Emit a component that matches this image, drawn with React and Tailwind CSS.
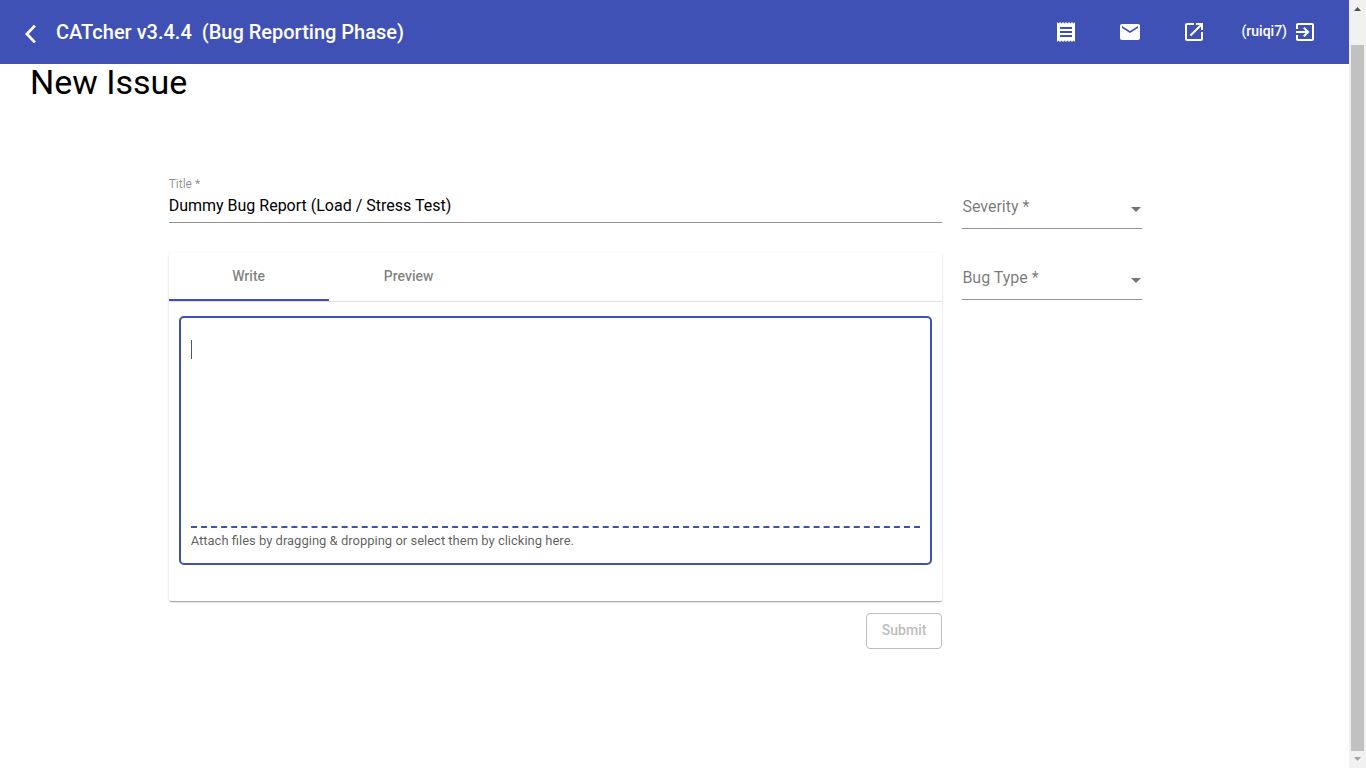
import React, { useState } from "react";

function Icon({ d, className = "size-6" }) {
  return (
    <svg viewBox="0 0 24 24" fill="currentColor" aria-hidden="true" className={className}>
      <path d={d} />
    </svg>
  );
}

const BACK = "M11.9 3.9L9.7 1.8 0 12l9.700 10.200 2.200-2.100L4.200 12z";
const RECEIPT =
  "M18 17H6v-2h12v2zm0-4H6v-2h12v2zm0-4H6V7h12v2zM3 22l1.5-1.5L6 22l1.5-1.5L9 22l1.5-1.5L12 22l1.5-1.5L15 22l1.5-1.5L18 22l1.5-1.5L21 22V2l-1.5 1.5L18 2l-1.5 1.5L15 2l-1.5 1.5L12 2l-1.5 1.5L9 2 7.5 3.5 6 2 4.5 3.5 3 2v20z";
const MAIL =
  "M20 4H4c-1.1 0-1.99.9-1.99 2L2 18c0 1.1.9 2 2 2h16c1.1 0 2-.9 2-2V6c0-1.1-.9-2-2-2zm0 4l-8 5-8-5V6l8 5 8-5v2z";
const OPEN =
  "M19 19H5V5h7V3H5c-1.11 0-2 .9-2 2v14c0 1.1.89 2 2 2h14c1.1 0 2-.9 2-2v-7h-2v7zM14 3v2h3.59l-9.83 9.83 1.41 1.41L19 6.41V10h2V3h-7z";
const EXIT =
  "M10.09 15.59L11.5 17l5-5-5-5-1.41 1.41L12.67 11H3v2h9.67l-2.58 2.59zM19 3H5c-1.11 0-2 .9-2 2v4h2V5h14v14H5v-4H3v4c0 1.1.89 2 2 2h14c1.1 0 2-.9 2-2V5c0-1.1-.9-2-2-2z";

function Header() {
  return (
    <header className="flex h-16 items-center bg-[#3f51b5] px-4 text-white">
      <button type="button" aria-label="Back" className="flex w-10 pt-1 pl-[9px]">
        <Icon d={BACK} className="size-[22px]" />
      </button>
      <span className="text-xl font-medium whitespace-pre">CATcher v3.4.4  (Bug Reporting Phase)</span>
      <div className="ml-auto flex items-center">
        <button type="button" aria-label="Activity log" className="px-5">
          <Icon d={RECEIPT} />
        </button>
        <button type="button" aria-label="Report a problem" className="px-5">
          <Icon d={MAIL} />
        </button>
        <a href="#issues" aria-label="Open in new tab" className="px-5">
          <Icon d={OPEN} />
        </a>
        <button type="button" aria-label="Log out" className="flex items-center gap-[6px] px-4 text-sm font-medium">
          <span className="pb-[2px]">(ruiqi7)</span>
          <Icon d={EXIT} />
        </button>
      </div>
    </header>
  );
}

function SelectField({ id, label, options }) {
  const [value, setValue] = useState("");
  return (
    <div className="relative flex h-12 items-center border-b border-[#949494] pt-1">
      <label
        htmlFor={id}
        className={
          value === ""
            ? "pointer-events-none absolute left-0 text-base text-black/54"
            : "pointer-events-none absolute -top-2 left-0 text-xs text-black/54"
        }
      >
        {label} *
      </label>
      <select
        id={id}
        value={value}
        onChange={(e) => setValue(e.target.value)}
        className="h-6 w-full min-w-0 flex-1 appearance-none bg-transparent text-base outline-none"
      >
        <option value="" />
        {options.map((o) => (
          <option key={o}>{o}</option>
        ))}
      </select>
      <svg viewBox="0 0 10 5" aria-hidden="true" className="mt-[6px] mr-px h-[5px] w-[10px] fill-[#757575]">
        <path d="M0 0h10L5 5z" />
      </svg>
    </div>
  );
}

function Editor() {
  const [text, setText] = useState("");
  return (
    <section className="rounded-xs bg-white pb-9 shadow-[0_2px_1px_-1px_rgba(0,0,0,0.2),0_1px_1px_0_rgba(0,0,0,0.14),0_1px_3px_0_rgba(0,0,0,0.12)]">
      <div role="tablist" className="flex border-b border-black/12 text-sm font-medium text-black/50">
        <button type="button" role="tab" aria-selected="true" className="h-12 w-40 border-b-2 border-[#3f51b5]">
          Write
        </button>
        <button type="button" role="tab" aria-selected="false" className="h-12 w-40 border-b-2 border-transparent">
          Preview
        </button>
      </div>
      <div className="mx-[10px] mt-[14px] rounded-[5px] border-2 border-[#3f51b5] px-[10px] pt-5 pb-3">
        <div className="relative">
          <textarea
            aria-label="Description"
            value={text}
            onChange={(e) => setText(e.target.value)}
            className="block h-[188px] w-full resize-none text-base caret-[#3f51b5] outline-none"
          />
          {text === "" && <span aria-hidden="true" className="absolute top-[2px] left-0 h-[19px] w-px bg-[#3f51b5]" />}
        </div>
        <label className="block border-t-2 border-dashed border-[#3f51b5] pt-[3px] text-[13px] leading-5 text-black/65">
          Attach files by dragging &amp; dropping or select them by clicking here.
          <input type="file" className="sr-only" />
        </label>
      </div>
    </section>
  );
}

function Scrollbar() {
  return (
    <div aria-hidden="true" className="flex w-[17px] flex-col items-center bg-[#f1f1f1]">
      <svg viewBox="0 0 17 17" className="size-[17px] shrink-0 fill-[#505050]">
        <path d="M8.500 7L12 11H5z" />
      </svg>
      <div className="mt-7 w-[13px] flex-1 bg-[#c1c1c1]" />
      <svg viewBox="0 0 17 17" className="size-[17px] shrink-0 fill-[#a3a3a3]">
        <path d="M5 6h7l-3.500 4z" />
      </svg>
    </div>
  );
}

export default function App() {
  return (
    <div className="flex min-h-screen bg-white font-[Roboto,sans-serif] text-black">
      <div className="min-w-0 flex-1">
        <Header />
        <main>
          <h1 className="pl-[30px] text-[34px] leading-9">New Issue</h1>
          <form className="mx-[12.5%] mt-[76px] flex gap-5 pr-[38px]" onSubmit={(e) => e.preventDefault()}>
            <div className="min-w-0 flex-1">
              <div className="border-b border-[#949494] pb-1">
                <label htmlFor="title" className="block text-xs leading-4 text-black/45">
                  Title *
                </label>
                <input
                  id="title"
                  defaultValue="Dummy Bug Report (Load / Stress Test)"
                  className="mt-[2px] block h-6 w-full text-base outline-none"
                />
              </div>
              <div className="mt-[30px]">
                <Editor />
              </div>
              <div className="mt-3 flex justify-end">
                <button
                  type="submit"
                  disabled
                  className="h-9 rounded-sm border border-[#bdbdbd] px-[15px] pb-[2px] text-sm font-medium text-[#bdbdbd]"
                >
                  Submit
                </button>
              </div>
            </div>
            <div className="flex w-[180px] flex-col gap-[23px] pt-[5px]">
              <SelectField id="severity" label="Severity" options={["Low", "Medium", "High"]} />
              <SelectField id="bug-type" label="Bug Type" options={["Functionality Bug", "Feature Flaw", "Documentation Bug"]} />
            </div>
          </form>
        </main>
      </div>
      <Scrollbar />
    </div>
  );
}
